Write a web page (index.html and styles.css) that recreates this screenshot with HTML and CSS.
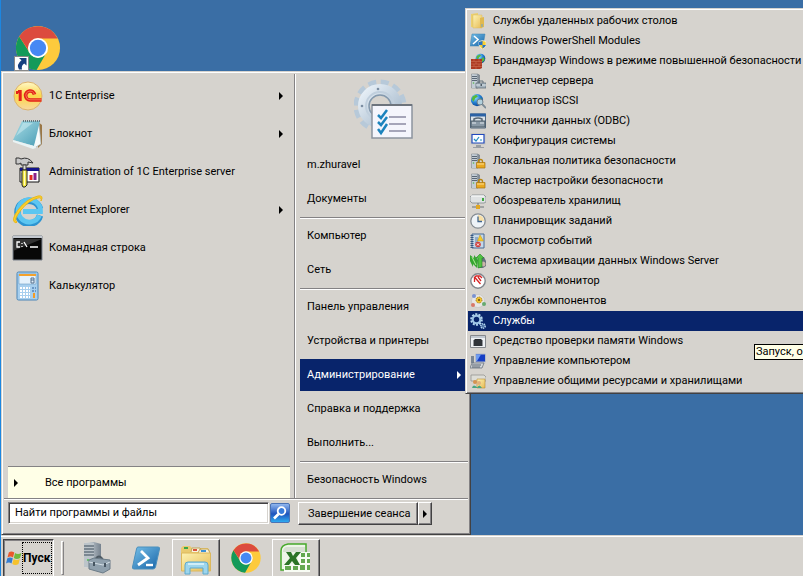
FILE: index.html
```html
<!DOCTYPE html>
<html lang="ru">
<head>
<meta charset="utf-8">
<meta name="viewport" content="width=device-width, initial-scale=1">
<title>Меню «Пуск»</title>
<link rel="stylesheet" href="styles.css">
</head>
<body>
<svg class="defs" aria-hidden="true">
  <defs>
    <linearGradient id="gold" x1="0" y1="0" x2="0" y2="1"><stop offset="0" stop-color="#fff8c8"/><stop offset=".5" stop-color="#fbd748"/><stop offset="1" stop-color="#f8d8a0"/></linearGradient>
    <linearGradient id="folder" x1="0" y1="0" x2="1" y2="1"><stop offset="0" stop-color="#fdf3b4"/><stop offset="1" stop-color="#e6bb55"/></linearGradient>
    <linearGradient id="aqua" x1="0" y1="0" x2="1" y2="1"><stop offset="0" stop-color="#a9dde6"/><stop offset="1" stop-color="#4a9db5"/></linearGradient>
    <linearGradient id="psblue" x1="0" y1="0" x2="1" y2="1"><stop offset="0" stop-color="#77c0e8"/><stop offset="1" stop-color="#1764a8"/></linearGradient>
    <linearGradient id="steel" x1="0" y1="0" x2="1" y2="0"><stop offset="0" stop-color="#dfe5e9"/><stop offset="1" stop-color="#76828e"/></linearGradient>
    <linearGradient id="gear" x1="0" y1="0" x2="1" y2="1"><stop offset="0" stop-color="#e8f0f7"/><stop offset="1" stop-color="#a3b7ca"/></linearGradient>
    <radialGradient id="globe" cx=".35" cy=".3" r=".8"><stop offset="0" stop-color="#9fe4ff"/><stop offset=".5" stop-color="#2583d6"/><stop offset="1" stop-color="#0b3c86"/></radialGradient>
    <symbol id="chrome" viewBox="0 0 48 48">
      <circle cx="24" cy="24" r="23" fill="#fdca3d"/>
      <path d="M4.400 12A23 23 0 0 0 22.500 47l10-17.500A10 10 0 0 1 15.300 29z" fill="#149a5a"/>
      <path d="M4.400 12A23 23 0 0 1 44.500 14H24A10 10 0 0 0 15 28z" fill="#dc4b3e"/>
      <circle cx="24" cy="24" r="10.500" fill="#fff"/><circle cx="24" cy="24" r="8.500" fill="#4688f4"/>
    </symbol>
    <symbol id="server" viewBox="0 0 16 16">
      <path d="M1.500 1h6l2 1v12l-2 1h-6z" fill="url(#steel)" stroke="#66717b" stroke-width=".5"/>
      <path d="M2 1.500h5V15H2z" fill="#c3cdd5"/><path d="M2 3.500h5M2 5.500h5M2 7.500h5" stroke="#596776"/><circle cx="3.500" cy="10" r=".8" fill="#59b64c"/>
    </symbol>
    <symbol id="case" viewBox="0 0 16 16">
      <path d="M9 10V8h4v2" fill="none" stroke="#65727d"/>
      <path d="M6 10h10v5H6z" fill="#a5b3be" stroke="#586670" stroke-width=".7"/><path d="M6 12h10" stroke="#dae3e8"/><path d="M10.500 11h1.500v2h-1.500z" fill="#4f5c66"/>
    </symbol>
    <symbol id="lock" viewBox="0 0 16 16">
      <path d="M8.500 10V8.500a2 2 0 0 1 4 0V10" fill="none" stroke="#b78513" stroke-width="1.300"/><path d="M6.500 9.500h8.500V15H6.500z" fill="#e9a820" stroke="#a77310" stroke-width=".7"/><path d="M7 11h7" stroke="#ffe08c"/>
    </symbol>
    <symbol id="earth" viewBox="0 0 16 16"><circle cx="8" cy="8" r="7" fill="url(#globe)"/><path d="M3 4l4-2 2 2-3 2-2 4-2-3zM9 8l4-2 1 4-3 3-2-2z" fill="#56b83b"/></symbol>
    <symbol id="ps" viewBox="0 0 32 32">
      <path d="M8 5h20q2 0 1.500 2l-4 18q-.5 2-2.500 2H4q-2 0-1.500-2l4-18q.3-2 1.500-2z" fill="url(#psblue)" stroke="#4b90bd"/>
      <path d="M11 9l7 7-10 7" fill="none" stroke="#fff" stroke-width="2.800"/><path d="M16 23h7" stroke="#fff" stroke-width="2.400"/>
    </symbol>
  </defs>
</svg>

<main class="desktop">
  <a class="shortcut" href="#" aria-label="Google Chrome">
    <svg viewBox="0 0 48 48"><use href="#chrome"/></svg>
    <svg class="shortcut-mark" viewBox="0 0 15 15"><path d="M.5.5h14v14H.5z" fill="#fff" stroke="#888"/><path d="M5 2h7.500v7.500l-2.300-2Q7 9.500 8 13.500H5q-3-5 2.500-9.200z" fill="#17407f"/></svg>
  </a>

  <section class="start-menu" aria-label="Меню Пуск">
    <div class="columns">
      <div class="programs">
        <ul class="pinned">
          <li><button class="program"><svg viewBox="0 0 32 32"><circle cx="16" cy="16" r="14" fill="url(#gold)" stroke="#dcb26c"/><path d="M4 12.500h2.200M8.200 21V11.500H6" fill="none" stroke="#e32119" stroke-width="3"/><path d="M29.500 20H18a4.500 4.500 0 1 1 4.500-5.500" fill="none" stroke="#e32119" stroke-width="3.600"/><path d="M29.500 19.800H18a4.300 4.300 0 1 1 4.300-5.500" fill="none" stroke="#f8b070" stroke-width=".6"/></svg><span>1C Enterprise</span><i class="arrow"></i></button></li>
          <li><button class="program"><svg viewBox="0 0 32 32"><path d="M26 4l4 3v19l-4 4z" fill="#9a7645"/><path d="M27 5l2 21-7 4-6-3z" fill="#f6fafa" stroke="#9fb3bd" stroke-width=".6"/><path d="M10 3h18l-6 25L1 22z" fill="url(#aqua)"/><path d="M4 18L11 5h10z" fill="#d3f0f3" opacity=".5"/><path d="M1 22l21 6 1-3 1 5-3 1L1 24z" fill="#e9f3f4"/><path d="M11 3h17" stroke="#66777d" stroke-width="2" stroke-dasharray="1 1"/></svg><span>Блокнот</span><i class="arrow"></i></button></li>
          <li><button class="program"><svg viewBox="0 0 32 32"><path d="M8 12h19v14H8z" fill="#fff" stroke="#111"/><path d="M8 12h19v3H8z" fill="#12128a"/><path d="M19 24v-5" stroke="#e12b20" stroke-width="3"/><path d="M23 24v-7" stroke="#8b238b" stroke-width="3"/><path d="M9 17h4v8H9z" fill="#bbb"/><path d="M4 2h3l2 1q7-3 12 4l-5-1v3H9V7L7 8H4z" fill="#c9c9c9" stroke="#333"/><path d="M11 9h3v5h-3z" fill="#ddd" stroke="#444"/><path d="M10 14h5v15l-2 2h-2l-1-2z" fill="#f3e848" stroke="#222"/><path d="M12.500 15v14" stroke="#fffdc0"/></svg><span>Administration of 1C Enterprise server</span></button></li>
          <li><button class="program"><svg viewBox="0 0 32 32"><path d="M28 21.500A11.500 11.500 0 1 1 28 15" fill="none" stroke="#2d94d1" stroke-width="6.500"/><path d="M27.500 21.500A11.200 11.200 0 1 1 28.500 17.500H11" fill="none" stroke="#5cc6f1" stroke-width="4.800"/><path d="M4 29Q-2 27 6 16T26 2q6-1 3 5 1-4-3-3Q17 6 9 16T5 28z" fill="#fbd12b" stroke="#e9b71c"/></svg><span>Internet Explorer</span><i class="arrow"></i></button></li>
          <li><button class="program"><svg viewBox="0 0 32 32"><path d="M1 4h29v24H1z" fill="#080808" stroke="#7b828c"/><path d="M1 4h29v2H1z" fill="#c3c8cf"/><path d="M1 7h29L1 19z" fill="#444" opacity=".7"/><path d="M8 10H5v5h3M10 11v1M10 14v1M12 10l3 5M18 15h8" fill="none" stroke="#fff" stroke-width="1.300"/></svg><span>Командная строка</span></button></li>
          <li><button class="program"><svg viewBox="0 0 32 32"><rect x="5" y="2" width="21" height="28" rx="1.500" fill="#a7cfee" stroke="#4c86b7"/><path d="M7 4h17v10H7z" fill="#e5f2fc" stroke="#6e9dc5" stroke-width=".6"/><path d="M7 4h17v2H7z" fill="#f3a12c"/><path d="M19 8h3v5h-3zM19 10h3" fill="none" stroke="#526e8c"/><path d="M8 18h10M8 21h10M8 24h10M8 27h10" stroke="#fff" stroke-width="2" stroke-dasharray="2 1"/><path d="M20 18h4M20 21h4" stroke="#6996c5" stroke-width="2" stroke-dasharray="2 1"/><path d="M21 23h2v5h-2z" fill="#f49a24"/></svg><span>Калькулятор</span></button></li>
        </ul>
        <button class="all-programs"><i class="arrow"></i><span>Все программы</span></button>
      </div>
      <div class="places">
        <svg class="user-picture" viewBox="0 0 60 62"><circle cx="26" cy="28" r="22.500" fill="none" stroke="#b7c9d9" stroke-width="8" stroke-dasharray="7.500 4.280"/><circle cx="26" cy="28" r="16.500" fill="none" stroke="url(#gear)" stroke-width="11"/><circle cx="26" cy="28" r="11" fill="none" stroke="#8499ad" stroke-width="1.500"/><circle cx="26" cy="28" r="14" fill="none" stroke="#c0cfdd" stroke-width="2"/><circle cx="24" cy="11" r="1.300" fill="#7c8ea2"/><circle cx="8" cy="28" r="1.300" fill="#7c8ea2"/><path d="M18 27h40v33H18z" fill="#f4f5fc" stroke="#8c949f" stroke-width="1.500"/><path d="M18 27h40" stroke="#6d747d" stroke-width="2"/><path d="M35 39h17M35 46h17M35 53h17" stroke="#8a8aa2" stroke-width="1.500"/><path d="M24 37l3 3 6-8M24 44l3 3 6-8M24 51l3 4 6-9" fill="none" stroke="#1c83bd" stroke-width="2.500"/></svg>
        <ul>
          <li><button class="place">m.zhuravel</button></li>
          <li><button class="place">Документы</button></li>
          <li class="rule"></li>
          <li><button class="place">Компьютер</button></li>
          <li><button class="place">Сеть</button></li>
          <li class="rule"></li>
          <li><button class="place">Панель управления</button></li>
          <li><button class="place">Устройства и принтеры</button></li>
          <li><button class="place selected">Администрирование<i class="arrow"></i></button></li>
          <li><button class="place">Справка и поддержка</button></li>
          <li><button class="place">Выполнить...</button></li>
          <li class="rule"></li>
          <li><button class="place">Безопасность Windows</button></li>
        </ul>
      </div>
    </div>
    <div class="menu-footer">
      <form class="search">
        <input type="text" value="Найти программы и файлы" aria-label="Найти программы и файлы">
        <button type="button" aria-label="Найти"><svg viewBox="0 0 16 16"><circle cx="9.500" cy="6" r="3.800" fill="#377bdb" stroke="#fff" stroke-width="1.800"/><path d="M6.500 9L2 13.500" stroke="#fff" stroke-width="2.600"/></svg></button>
      </form>
      <div class="session">
        <button class="logoff">Завершение сеанса</button><button class="more" aria-label="Другие действия"><i class="arrow"></i></button>
      </div>
    </div>
  </section>

  <ul class="submenu" aria-label="Администрирование">
    <li><button><svg viewBox="0 0 16 16"><path d="M1 1l7-1v15l-7-1z" fill="#ecd06e"/><path d="M3 2h9v13H3z" fill="url(#folder)" stroke="#d9ba61" stroke-width=".5"/><path d="M10 5l4-1v10l-4 1z" fill="#e0b94f"/><path d="M12 11v3" stroke="#6da2c9"/></svg>Службы удаленных рабочих столов</button></li>
    <li><button><svg viewBox="0 0 16 16"><path d="M2 1h13l-2 12H0z" fill="url(#psblue)" stroke="#3b82b3" stroke-width=".5"/><path d="M4 3l4 3.500L3 11" fill="none" stroke="#fff" stroke-width="1.600"/><path d="M9 8.500l3.500-1L16 8.500V12q-1 3-3.500 4Q10 15 9 12z" fill="#f8cf31" stroke="#fff" stroke-width=".6"/><path d="M12.500 8v4H9V9zM12.500 12H16q-1 2.500-3.500 3.500z" fill="#2774c7"/></svg>Windows PowerShell Modules</button></li>
    <li><button><svg viewBox="0 0 16 16"><use href="#earth" x="5" y="0" width="11" height="11"/><path d="M1 6h11v9l-2 1H1z" fill="#ad3a22"/><path d="M1 8.500h11M1 11h11M1 13.500h11M4 6v2.500M9 6v2.500M6 8.500V11M4 11v2.500M9 11v2.500M6 13.500V16" stroke="#d07a5c" stroke-width=".5"/></svg>Брандмауэр Windows в режиме повышенной безопасности</button></li>
    <li><button><svg viewBox="0 0 16 16"><use href="#server"/><use href="#case"/></svg>Диспетчер сервера</button></li>
    <li><button><svg viewBox="0 0 16 16"><use href="#earth" x="0" y="0" width="14" height="14"/><circle cx="10" cy="9" r="3" fill="#b2d0dc" stroke="#71818c"/><path d="M12 11l4 4" stroke="#7b8a95" stroke-width="1.800"/></svg>Инициатор iSCSI</button></li>
    <li><button><svg viewBox="0 0 16 16"><path d="M.5 1h15v14H.5z" fill="#dce3ea" stroke="#52687f"/><path d="M0 .5h16v3H0z" fill="#2c62a5"/><path d="M4 8V6q4-2 8 0v2" fill="none" stroke="#586774" stroke-width="1.500"/><path d="M1 8h14v6H1z" fill="#8999a6" stroke="#4c5c68"/><path d="M2 10h4m4 0h4" stroke="#e3e9ef"/></svg>Источники данных (ODBC)</button></li>
    <li><button><svg viewBox="0 0 16 16"><path d="M1.500 1h13v9.500h-13z" fill="#fff" stroke="#c8c8c0" stroke-width="2"/><path d="M2 1.500h12v8.500H2z" fill="#f8fcff" stroke="#2148bd" stroke-width="1.200"/><path d="M4 6l2 2 3-4M10 7h2" fill="none" stroke="#208bc0" stroke-width="1.200"/><path d="M6 12h5v2H6zM3 14h11v1H3z" fill="#999ea3"/></svg>Конфигурация системы</button></li>
    <li><button><svg viewBox="0 0 16 16"><use href="#server"/><use href="#lock"/></svg>Локальная политика безопасности</button></li>
    <li><button><svg viewBox="0 0 16 16"><use href="#server"/><use href="#lock"/></svg>Мастер настройки безопасности</button></li>
    <li><button><svg viewBox="0 0 16 16"><path d="M2 2h12l2 2v5l-2 1H2L0 8V4z" fill="#dfe2e3" stroke="#777e82" stroke-width=".7"/><path d="M1 3h13" stroke="#fff"/><path d="M12 5h2v3h-2z" fill="#3ea840"/><path d="M8 10v3M2 14h12" stroke="#6b7277"/><path d="M6 12h4v4H6z" fill="#e2a824"/></svg>Обозреватель хранилищ</button></li>
    <li><button><svg viewBox="0 0 16 16"><circle cx="8" cy="8" r="7.200" fill="#eef3f7" stroke="#858c92" stroke-width="1.300"/><path d="M8 2a6 6 0 0 1 6 6H8z" fill="#f8dfa5"/><path d="M8 3.500V8.500h4" fill="none" stroke="#41658c" stroke-width="1.300"/></svg>Планировщик заданий</button></li>
    <li><button><svg viewBox="0 0 16 16"><path d="M2 1h12v14H2z" fill="#c5d8e9" stroke="#486b94"/><path d="M2 2v13" stroke="#385a82" stroke-width="3" stroke-dasharray="1 1"/><path d="M5 5h3M5 7h3M5 9h3" stroke="#5c81aa"/><path d="M10 2l3.500 6h-6z" fill="#f6ca28" stroke="#bd921a" stroke-width=".5"/><circle cx="8" cy="11.500" r="2.800" fill="#ce3e3b"/><path d="M7 10.500l2 2m0-2l-2 2" stroke="#fff"/></svg>Просмотр событий</button></li>
    <li><button><svg viewBox="0 0 16 16"><path d="M10 4h4l2 4v5l-3 2H8z" fill="#67717e"/><circle cx="13" cy="11" r="2.500" fill="#ccb6aa"/><path d="M0 2l4 3V2l4 5-1 8-4-4v3L0 8z" fill="#37a532"/><path d="M8 15V5H6l4-4 4 4h-2v9z" fill="#52c242" stroke="#23832a" stroke-width=".6"/><path d="M2 4l4 8" stroke="#b2ed98"/></svg>Система архивации данных Windows Server</button></li>
    <li><button><svg viewBox="0 0 16 16"><circle cx="8" cy="8" r="7.200" fill="#fff" stroke="#81868c" stroke-width="1.400"/><path d="M4 5l2-2h4l2 2M4.500 4v5m0-5l6 7M8 4l3 4" fill="none" stroke="#d62424" stroke-width="1.300"/></svg>Системный монитор</button></li>
    <li><button><svg viewBox="0 0 16 16"><circle cx="8" cy="8" r="6.500" fill="#e8e7e5" stroke="#bbb" stroke-width=".5"/><circle cx="4" cy="3" r="2" fill="#7992d1"/><circle cx="3" cy="12" r="2" fill="#d87868"/><circle cx="14" cy="11" r="2" fill="#66aa70"/><circle cx="9" cy="7" r="3" fill="#f0c12d" stroke="#9b7311" stroke-dasharray="1 1"/><circle cx="9" cy="7" r="1" fill="#664a17"/></svg>Службы компонентов</button></li>
    <li><button class="selected"><svg viewBox="0 0 16 16"><circle cx="6.500" cy="6.500" r="5.300" fill="none" stroke="#b8daf1" stroke-width="2" stroke-dasharray="2 1.300"/><circle cx="6.500" cy="6.500" r="3.800" fill="none" stroke="#9fc4e4" stroke-width="2.200"/><circle cx="13" cy="13" r="2.200" fill="none" stroke="#b8daf1" stroke-width="1.500" stroke-dasharray="1.300 .7"/><circle cx="13" cy="13" r="1.300" fill="none" stroke="#8bb3d7"/></svg>Службы</button></li>
    <li><button><svg viewBox="0 0 16 16"><path d="M.5 2.500h15v12H.5z" fill="#edf0f3" stroke="#85888c"/><path d="M1 3h14v2H1z" fill="#c2c9d1"/><path d="M5 6h6l1 1v6H4V7z" fill="#292c30"/><path d="M3 8h10M3 10h10M3 12h10" stroke="#393d42"/></svg>Средство проверки памяти Windows</button></li>
    <li><button><svg viewBox="0 0 16 16"><path d="M5.500 1h10v8h-10z" fill="#173fc4" stroke="#b7bdc7"/><path d="M6 1.500h5L7 8H6z" fill="#6f9cf1"/><path d="M1 3h3v7H1z" fill="#7b8794"/><path d="M2 10h12l-2 5H0z" fill="#d3d7db" stroke="#6b7580" stroke-width=".8"/><path d="M2 12h9M2 14h8" stroke="#59636e"/></svg>Управление компьютером</button></li>
    <li><button><svg viewBox="0 0 16 16"><path d="M1 2h13l2 2v4H1z" fill="#ddddd7" stroke="#8b8b87" stroke-width=".7"/><path d="M7 6h8v9H7z" fill="url(#folder)" stroke="#b98d35" stroke-width=".6"/><circle cx="5" cy="9" r="2" fill="#d5934f"/><circle cx="9" cy="10" r="2" fill="#e2b07b"/><path d="M2 15q1-5 6 0zM7 15q2-5 5 0z" fill="#47a580"/></svg>Управление общими ресурсами и хранилищами</button></li>
  </ul>
  <div class="tooltip" role="tooltip">Запуск, о</div>
</main>

<footer class="taskbar">
  <button class="start"><svg viewBox="0 0 16 16"><path d="M2.800 2.500q2.500-1.800 5.500 0L7 7.500q-2.500-1.800-5.500 0z" fill="#e9582c"/><path d="M9 3q2.800 1.800 6.500 0L14 8q-3.200 1.800-6.200 0z" fill="#70b93d"/><path d="M1.300 8.300q2.600-1.800 5.500 0L5.500 13.500Q3 11.700 0 13.500z" fill="#347cd0"/><path d="M7.600 9q3 1.800 6.200 0l-1.300 5q-3.200 1.800-6.200 0z" fill="#f6c22c"/></svg><span>Пуск</span></button>
  <i class="grip"></i>
  <nav class="apps">
    <button class="app" aria-label="Диспетчер сервера"><svg viewBox="0 0 32 32"><path d="M4 1l10-1 7 2v24l-6 1-11-2z" fill="url(#steel)"/><path d="M4 1h10v24H4z" fill="#bcc4ca"/><path d="M4 4h10M4 7h10M4 10h10M4 13h10" stroke="#66737f" stroke-width="1.500"/><circle cx="8" cy="18" r="1" fill="#4cc04c"/><path d="M15 18q4-7 8 0" fill="none" stroke="#4e5a63" stroke-width="2"/><path d="M9 18l5-2 16 2v9l-7 4-14-4z" fill="#8fa0ad" stroke="#6b7b87"/><path d="M9 20l14 3 7-3" fill="none" stroke="#d3dee5"/><path d="M14 20v4m11-3v4" stroke="#465561" stroke-width="2"/></svg></button>
    <button class="app" aria-label="Windows PowerShell"><svg viewBox="0 0 32 32"><use href="#ps"/></svg></button>
    <button class="app raised" aria-label="Проводник"><svg viewBox="0 0 32 32"><path d="M1 5l2-2h7l2 2h16l2 3v20H1z" fill="#e9ca70"/><path d="M11 9l1-4h8l2 4M18 10l2-4h8l2 4" fill="#f7f2df" stroke="#c2a456"/><path d="M1.500 10h29v18h-29z" fill="url(#folder)" stroke="#dcb85c"/><path d="M4 4h4v2H4z" fill="#38a748"/><path d="M13 6h4v2h-4z" fill="#d9523b"/><path d="M21 7h5v2h-5z" fill="#3c91d6"/><path d="M5 31V22q0-3 3-3h17q3 0 3 3v9h-5v-6H10v6z" fill="#9dd5ec" stroke="#5ca9ce"/><path d="M8 21h16" stroke="#e2f6fc" stroke-width="1.500"/></svg></button>
    <button class="app" aria-label="Google Chrome"><svg viewBox="-1 -1 50 50"><use href="#chrome" width="48" height="48"/></svg></button>
    <button class="app raised" aria-label="Excel"><svg viewBox="0 0 32 32"><path d="M8 1h18v26H1V8q0-6 7-7z" fill="#eef5e8" stroke="#47a92b" stroke-width="1.500"/><path d="M6 4h19v5H3q0-4 3-5z" fill="#d7dfd1"/><path d="M18 9h12v20H4v-8h14z" fill="#f8fcf4"/><path d="M21 10h4v4h-4zm6 0h3v4h-3zm-6 6h4v4h-4zm6 0h3v4h-3zm-7 6h5v5h-5zm7 0h3v5h-3zM5 23h6v4H5zm8 0h5v4h-5z" fill="#64a850"/><path d="M6 9h5l2 4 3-4h5l-5 6 4 7h-5l-3-4-3 4H4l6-7z" fill="#2c7426"/></svg></button>
  </nav>
</footer>
</body>
</html>
```

FILE: styles.css
```css
* { box-sizing: border-box; }

:root {
  --face: #d6d3ce;
  --navy: #08246b;
  --shade: #848284;
  --dark: #424142;
  --cream: #ffffe7;
}

body {
  margin: 0;
  height: 100vh;
  display: flex;
  flex-direction: column;
  overflow: hidden;
  background: #3a6ea5;
  border-left: 1px solid #1c86e0;
  color: #000;
  font: 11px/14px Roboto, "DejaVu Sans", sans-serif;
}

ul { list-style: none; margin: 0; padding: 0; }

button, input { font: inherit; color: inherit; }

button {
  margin: 0;
  padding: 0;
  border: 0;
  border-radius: 0;
  background: none;
  text-align: left;
  white-space: nowrap;
}

svg { display: block; flex: none; }

.defs { position: absolute; width: 0; height: 0; }

.arrow {
  flex: none;
  width: 0;
  height: 0;
  border: 4px solid transparent;
  border-left-color: currentColor;
  border-right: 0;
}

.desktop { flex: 1; position: relative; min-height: 0; }

.shortcut { position: absolute; left: 14px; top: 25px; }
.shortcut > svg { width: 46px; height: 46px; }
.shortcut > .shortcut-mark { position: absolute; left: -1px; bottom: 0; width: 15px; height: 15px; }

/* Start menu */
.start-menu {
  position: absolute;
  left: 0;
  bottom: 0;
  width: 470px;
  background: var(--face);
  border: 1px solid;
  border-color: var(--face) var(--dark) var(--dark) var(--face);
  box-shadow: inset 1px 1px #fff, inset -1px -1px var(--shade);
  padding: 2px;
}

.columns { display: flex; border-bottom: 1px solid var(--shade); }

.programs {
  flex: none;
  width: 291px;
  display: flex;
  flex-direction: column;
  justify-content: space-between;
  padding: 3px 4px 0;
  border-right: 1px solid var(--shade);
}

.program {
  width: 100%;
  height: 38px;
  display: flex;
  align-items: center;
  gap: 5px;
  padding: 0 7px 0 4px;
}
.program svg { width: 32px; height: 32px; }
.program span { flex: 1; }

.all-programs {
  display: flex;
  align-items: center;
  gap: 27px;
  height: 32px;
  padding: 0 6px;
  background: var(--cream);
  border-top: 1px solid var(--shade);
}

.places {
  flex: 1;
  border-left: 1px solid #fff;
  padding: 4px 0 1px 4px;
}
.places li { display: flex; padding: 1px 0; }

.user-picture { width: 60px; height: 62px; margin: 0 0 8px 54px; }

.place {
  display: flex;
  align-items: center;
  justify-content: space-between;
  width: 100%;
  height: 32px;
  padding: 0 7px;
}
.selected { background: var(--navy); color: #fff; }

.places .rule { height: 3px; border-top: 1px solid var(--face); background: linear-gradient(var(--shade) 50%, #fff 50%); }

.menu-footer {
  display: flex;
  gap: 8px;
  padding: 2px 4px 7px;
  border-top: 1px solid #fff;
}

.search { display: flex; flex: none; width: 282px; height: 22px; }

.search input {
  flex: 1;
  min-width: 0;
  padding: 0 6px;
  background: #fff;
  border: 1px solid;
  border-color: var(--shade) #fff #fff var(--shade);
  box-shadow: inset 1px 1px var(--dark), inset -1px -1px var(--face);
  border-radius: 0;
  outline: 0;
}

.search button {
  width: 20px;
  height: 20px;
  margin: 1px 0 0 1px;
  padding: 1px;
  border: 1px solid #4b73b5;
  border-radius: 2px;
  background: linear-gradient(#91b7ee, #1d54bd 55%, #2eaaf0);
}
.search svg { width: 16px; height: 16px; }

.session { display: flex; height: 23px; }

.session button, .raised {
  background: var(--face);
  border: 1px solid;
  border-color: #fff var(--dark) var(--dark) #fff;
  box-shadow: inset -1px -1px var(--shade);
}
.session .logoff { width: 120px; padding: 0 9px; }
.session .more { width: 14px; display: flex; align-items: center; justify-content: center; }

/* Administrative tools */
.submenu {
  position: absolute;
  left: 464px;
  right: -4px;
  top: 8px;
  padding: 2px;
  background: var(--face);
  border: 1px solid;
  border-color: var(--face) var(--dark) var(--dark) var(--face);
  box-shadow: inset 1px 1px #fff, inset -1px -1px var(--shade);
}

.submenu button {
  display: flex;
  align-items: center;
  gap: 7px;
  width: 100%;
  height: 20px;
  padding: 0 2px;
}
.submenu svg { width: 16px; height: 16px; }

.tooltip {
  position: absolute;
  left: 753px;
  right: -12px;
  top: 344px;
  padding: 0 1px;
  background: var(--cream);
  border: 1px solid #000;
  white-space: nowrap;
}

/* Taskbar */
.taskbar {
  flex: none;
  height: 41px;
  display: flex;
  padding: 2px 2px 0;
  background: var(--face);
  border-top: 1px solid var(--face);
  box-shadow: inset 0 1px #fff;
}

.start {
  display: flex;
  align-items: center;
  width: 51px;
  height: 40px;
  margin-top: 1px;
  padding: 0 1px 2px 2px;
  border: 1px solid;
  border-color: var(--dark) #fff #fff var(--dark);
  box-shadow: inset 1px 1px var(--shade);
  font-size: 12px;
  font-weight: bold;
}
.start svg { width: 16px; height: 16px; }
.start span { flex: 1; border: 1px dotted #000; line-height: 30px; }

.grip { width: 3px; height: 34px; margin: 3px 8px 0 7px; border: 1px solid; border-color: #fff var(--shade) var(--shade) #fff; }

.apps { display: flex; gap: 2px; margin-top: 1px; }

.app { display: flex; justify-content: center; width: 48px; height: 40px; padding-top: 3px; }
.app svg { width: 32px; height: 32px; }
```
